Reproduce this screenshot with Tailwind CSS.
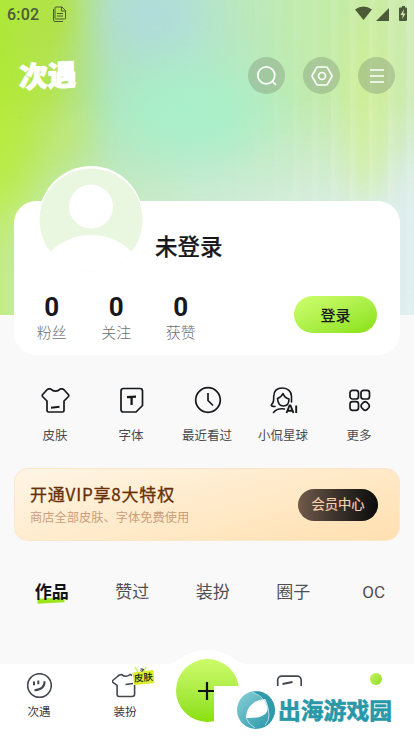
<!DOCTYPE html>
<html lang="zh-CN">
<head>
<meta charset="utf-8">
<meta name="viewport" content="width=device-width, initial-scale=1">
<title>次遇</title>
<script src="https://cdn.jsdelivr.net/npm/@tailwindcss/browser@4"></script>
</head>
<body class="bg-[#f9f9f9]">
<div class="relative flex h-[736px] w-[414px] flex-col overflow-hidden bg-[#f9f9f9] font-['Roboto','Noto_Sans_CJK_SC',sans-serif] text-[#17181b]">

  <!-- Header backdrop -->
  <svg class="absolute top-0 left-0" width="414" height="315" viewBox="0 0 414 315" color-interpolation-filters="sRGB">
    <defs>
      <linearGradient id="base" x1="0" x2="1" y1="0" y2="0">
        <stop offset="0" stop-color="#aee838"/><stop offset=".12" stop-color="#b4e454"/><stop offset=".28" stop-color="#b2e2ba"/><stop offset=".46" stop-color="#b5e6cc"/><stop offset=".7" stop-color="#bfebb0"/><stop offset=".9" stop-color="#c8ec9e"/><stop offset="1" stop-color="#cdebb5"/>
      </linearGradient>
      <linearGradient id="low" x1="0" x2="1" y1="0" y2="0">
        <stop offset="0" stop-color="#c3ec86"/><stop offset=".1" stop-color="#c4ebb0"/><stop offset=".5" stop-color="#cfecd4"/><stop offset="1" stop-color="#dfeef0"/>
      </linearGradient>
      <linearGradient id="fade" x1="0" x2="0" y1="0" y2="1"><stop offset=".3" stop-color="#000"/><stop offset=".68" stop-color="#fff"/></linearGradient>
      <mask id="m"><rect width="414" height="315" fill="url(#fade)"/></mask>
      <linearGradient id="ribfade" x1="0" x2="1" y1="0" y2="0"><stop offset=".5" stop-color="#000"/><stop offset=".9" stop-color="#fff"/></linearGradient>
      <mask id="rm"><rect width="414" height="315" fill="url(#ribfade)"/></mask>
      <filter id="b" x="-150%" y="-150%" width="400%" height="400%"><feGaussianBlur stdDeviation="27"/></filter>
      <filter id="s" x="-300%" y="-100%" width="700%" height="300%"><feGaussianBlur stdDeviation="15"/></filter>
      <linearGradient id="rib" x1="9" x2="28" y1="0" y2="0" gradientUnits="userSpaceOnUse" spreadMethod="repeat">
        <stop offset="0" stop-color="#fff" stop-opacity=".15"/><stop offset=".5" stop-color="#fff" stop-opacity="0"/><stop offset=".85" stop-color="#fff" stop-opacity="0"/><stop offset="1" stop-color="#fff" stop-opacity=".13"/>
      </linearGradient>
      <clipPath id="c"><rect width="414" height="315"/></clipPath>
    </defs>
    <g clip-path="url(#c)">
      <rect width="414" height="315" fill="url(#base)"/>
      <rect width="414" height="315" fill="url(#low)" mask="url(#m)"/>
      <ellipse cx="150" cy="15" rx="42" ry="48" fill="#afdbe0" filter="url(#b)"/>
      <ellipse cx="190" cy="112" rx="85" ry="42" fill="#a7f0c9" filter="url(#b)"/>
      <ellipse cx="-2" cy="150" rx="28" ry="75" fill="#b9ec3a" filter="url(#b)"/>
      <ellipse cx="54" cy="12" rx="18" ry="38" fill="#afe13c" opacity=".75" filter="url(#s)"/>
      <ellipse cx="68" cy="132" rx="18" ry="26" fill="#c5eb77" opacity=".6" filter="url(#s)"/>
      <ellipse cx="366" cy="115" rx="14" ry="85" fill="#d5f193" opacity=".8" filter="url(#s)"/>
      <ellipse cx="414" cy="215" rx="12" ry="60" fill="#dcedeb" filter="url(#s)"/>
      <rect width="414" height="315" fill="url(#rib)" mask="url(#rm)"/>
    </g>
  </svg>

  <!-- Status bar -->
  <div class="relative flex h-7 shrink-0 items-center pr-[7px] pl-[7px] text-[#4b5b38]">
    <span class="mt-px text-[16px] leading-7 font-medium tracking-[0.2px]">6:02</span>
    <svg class="ml-[13px]" width="15" height="17" viewBox="0 0 15 17" fill="none" stroke="currentColor" stroke-width="1"><path d="M4 1h6l3.500 3.500V12q0 1-1 1H4q-1 0-1-1V2q0-1 1-1ZM9.500 1v4h4M1.500 3v11q0 1.500 1.500 1.500h8M5 7.500h6M5 10h6"/></svg>
    <svg class="ml-auto" width="52" height="16" viewBox="0 0 52 16" fill="currentColor"><path d="M0 3.500Q8.500-2.500 17 3.500L8.500 14ZM34 2v13H21ZM45 1.500h2V0h3v1.500h1q1 0 1 1V14q0 1-1 1h-6q-1 0-1-1V2.500q0-1 1-1Z"/><path d="m49 3-3.500 6h2.300l-.6 4L50.500 7.500h-2.300Z" fill="#d0ebb0"/></svg>
  </div>

  <!-- App header -->
  <header class="relative flex h-[95px] shrink-0 items-center gap-[18px] pr-[19px] pl-[19px]">
    <div class="mt-[4px] mr-auto origin-left -skew-y-3 text-[29px] leading-8 font-black tracking-[-0.5px] text-white [-webkit-text-stroke:0.8px_white]">次遇</div>
    <div class="flex size-[37px] items-center justify-center rounded-full bg-[#7f9578]/40">
      <svg width="21" height="21" viewBox="0 0 21 21" fill="none" stroke="#fff" stroke-width="1.700"><circle cx="10.300" cy="10.300" r="8.500"/><path d="m16 16 4 4"/></svg>
    </div>
    <div class="flex size-[37px] items-center justify-center rounded-full bg-[#7f9578]/40">
      <svg width="22" height="20" viewBox="0 0 22 20" fill="none" stroke="#fff" stroke-width="1.700" stroke-linejoin="round"><path d="M6.500 1h9Q16 1 16.400 1.600L20.700 9.200q.5.800 0 1.600L16.400 18.400Q16 19 15.500 19h-9q-.5 0-.9-.6L1.300 10.800q-.5-.8 0-1.600L5.600 1.600Q6 1 6.500 1Z"/><circle cx="11" cy="10" r="3.500"/></svg>
    </div>
    <div class="flex size-[37px] items-center justify-center rounded-full bg-[#7f9578]/40">
      <svg width="14" height="14" viewBox="0 0 14 14" stroke="#fff" stroke-width="1.600"><path d="M0 1h14M0 7h14M0 13h14"/></svg>
    </div>
  </header>

  <!-- Profile card -->
  <section class="relative mx-[14px] mt-[78px] flex h-[154px] shrink-0 flex-col rounded-[22px] bg-white">
    <svg class="absolute -top-[35px] left-[25px]" width="104" height="106" viewBox="0 0 104 106">
      <defs><clipPath id="av"><circle cx="52" cy="54" r="51.500"/></clipPath></defs>
      <circle cx="52" cy="52" r="52" fill="#fff"/>
      <g clip-path="url(#av)"><rect width="104" height="106" fill="#eaf7e0"/><circle cx="52" cy="40.500" r="22" fill="#fff"/><circle cx="52" cy="127" r="58" fill="#fff"/><rect y="87" width="104" height="20" fill="#fff"/></g>
    </svg>
    <h1 class="mt-[30px] ml-[141px] text-[22.500px] leading-8 font-medium [-webkit-text-stroke:0.200px_#17181b]">未登录</h1>
    <div class="mt-[28px] flex items-start pl-[5.500px]">
      <div class="flex w-[64.500px] flex-col items-center"><b class="text-[26px] leading-[32px]">0</b><span class="text-[15px] leading-5 font-light text-[#6f6f73]">粉丝</span></div>
      <div class="flex w-[64.500px] flex-col items-center"><b class="text-[26px] leading-[32px]">0</b><span class="text-[15px] leading-5 font-light text-[#6f6f73]">关注</span></div>
      <div class="flex w-[64.500px] flex-col items-center"><b class="text-[26px] leading-[32px]">0</b><span class="text-[15px] leading-5 font-light text-[#6f6f73]">获赞</span></div>
      <button class="mt-[5px] mr-[23px] ml-auto h-[37px] w-[83px] rounded-full bg-linear-to-br from-[#d0ff6e] to-[#88e000] pt-[3px] text-[15px] font-medium">登录</button>
    </div>
  </section>

  <!-- Shortcuts -->
  <nav class="mt-[29px] grid shrink-0 grid-cols-5 px-[17px] text-[12.500px] leading-5 text-[#4a4a4d]">
    <div class="flex flex-col items-center gap-[10px]">
      <svg width="32" height="32" viewBox="0 0 32 32" fill="none" stroke="#17181b" stroke-width="1.700" stroke-linejoin="round"><path d="M10 4.800h1.500Q16.500 9.500 21.500 4.800H23q1 0 2 1l4.500 5q.6.900 0 1.700L25 17V26.500q0 1.500-1.500 1.500H9.500Q8 28 8 26.500V17L3.500 12.500q-.6-.8 0-1.700L8 5.800q1-1 2-1Z"/><path d="m12 23.700 8.500-.9" stroke-width="2"/></svg>
      <span>皮肤</span>
    </div>
    <div class="flex flex-col items-center gap-[10px]">
      <svg width="32" height="32" viewBox="0 0 32 32" fill="none" stroke="#17181b" stroke-width="1.700" stroke-linejoin="round"><path d="M8.500 4.500h16.500Q27.500 4.500 27.500 7v14.500L21 28H8.500Q6 28 6 25.500V7q0-2.500 2.500-2.500Z"/><path d="m12 13.200 9-.5M16.600 13v8" stroke-width="2.300"/></svg>
      <span>字体</span>
    </div>
    <div class="flex flex-col items-center gap-[10px]">
      <svg width="32" height="32" viewBox="0 0 32 32" fill="none" stroke="#17181b" stroke-width="1.700"><circle cx="17" cy="16" r="12.300"/><path d="M17 9v7.500l5 5"/></svg>
      <span>最近看过</span>
    </div>
    <div class="flex flex-col items-center gap-[10px]">
      <svg width="32" height="32" viewBox="0 0 32 32" fill="none" stroke="#17181b" stroke-width="1.600" stroke-linecap="round" stroke-linejoin="round"><path d="M8 22.500q-4.500 0-3.500-2 2.500-1.500 2.200-8C6.700 7 10.200 4 15.500 4s9 3.500 9 8.500v5.500M16 9.500q-2 4-5.500 5 .5 7.500 6 7.500t5.500-7q-4.500-1-6-5.500ZM6.500 28.500Q10 24 17.500 25"/><path d="m19.500 29 3-7.500h1l3 7.500M20.500 26.800h5M29.200 21.500V29" stroke-width="1.900" stroke-linecap="butt"/></svg>
      <span>小侃星球</span>
    </div>
    <div class="flex flex-col items-center gap-[10px]">
      <svg width="32" height="32" viewBox="0 0 32 32" fill="none" stroke="#17181b" stroke-width="1.700"><rect x="7" y="6.300" width="8.500" height="8.700" rx="2.500"/><rect x="18" y="6.300" width="8.500" height="8.700" rx="2.500"/><rect x="7" y="17.600" width="8.500" height="8.700" rx="2.500"/><path d="m20.700 18.200q1.500-1 3 0l2.200 2.300q1 1.500 0 3l-2.200 2.300q-1.500 1-3 0l-2.200-2.300q-1-1.500 0-3Z"/></svg>
      <span>更多</span>
    </div>
  </nav>

  <!-- VIP banner -->
  <section class="mx-[14px] mt-[22px] flex h-[73px] shrink-0 items-center justify-between rounded-[14px] border border-[#fde6cc] bg-linear-[165deg,#fff5e5,#ffe0b0] pr-[21px] pl-[15px]">
    <div class="flex flex-col">
      <h2 class="font-['Noto_Sans_CJK_SC',sans-serif] text-[17px] leading-6 tracking-[0.800px] text-[#682f06] [-webkit-text-stroke:0.300px_#682f06]">开通VIP享8大特权</h2>
      <p class="mt-[2px] text-[12.250px] leading-5 text-[#cc9d78]">商店全部皮肤、字体免费使用</p>
    </div>
    <button class="h-8 w-20 rounded-full bg-linear-to-r from-[#705a4b] to-[#0c0d0c] pt-px text-[13.300px] text-[#f7d2ab] [-webkit-text-stroke:0.200px_#f7d2ab]">会员中心</button>
  </section>

  <!-- Content tabs -->
  <nav class="mt-[37px] grid w-[402.500px] shrink-0 translate-x-[11.500px] grid-cols-5 text-center text-[17px] leading-7 text-[#4f4f52]">
    <div class="relative"><span class="absolute top-[20px] left-[26px] h-[5px] w-[27px] -skew-y-3 bg-[#9ae51e]"></span><span class="relative font-bold text-[#111214]">作品</span></div>
    <div>赞过</div>
    <div>装扮</div>
    <div>圈子</div>
    <div>OC</div>
  </nav>

  <!-- Bottom navigation -->
  <footer class="relative mt-auto flex h-[72px] shrink-0 bg-white text-[11.500px] leading-4 text-[#33353b]">
    <svg class="absolute -top-[14px] left-[164px]" width="86" height="15" viewBox="0 0 86 15" fill="#fff"><path d="M0 15Q9 14 17 8 28 0 43 0t26 8q8 6 17 7Z"/></svg>
    <div class="flex w-[78px] flex-col items-center pt-[9px]">
      <svg width="26" height="26" viewBox="0 0 26 26" fill="none" stroke="#44474f" stroke-width="1.600"><circle cx="13.500" cy="12.500" r="11.800"/><path d="M8 8.500v3.700M12.300 7.500v3.700M18.500 8.200q.5 8-10 9" stroke-width="2"/></svg>
      <span class="mt-[5px]">次遇</span>
    </div>
    <div class="relative ml-[7px] flex w-[80px] flex-col items-center pt-[9px]">
      <svg width="26" height="26" viewBox="0 0 26 26" fill="none" stroke="#44474f" stroke-width="1.600" stroke-linejoin="round"><path d="M20 2.500 18 1.500q-4 3.500-8.500 0-3 .5-4 2L.7 7.500q-.8 1 .2 1.800l4.200 3V21q0 2.500 2 2.500h13q2.500 0 2.500-2.500v-9M13.500 11.500l7.500-1"/></svg>
      <span class="mt-[5px]">装扮</span>
      <svg class="absolute top-0 left-[47px]" width="24" height="22" viewBox="0 0 24 22"><path d="m3 3 3 5M14 3l-3 6" stroke="#c6f577" stroke-width="1.600"/><path d="m1.500 8.500 19-2.500q1 0 1 1l.8 11q0 1-1 1.300L3 21q-1 0-1-1L.5 9.500q0-1 1-1Z" fill="#dbed2f"/><path d="m8.500 5 3 .2-1 2q-1.500 0-2-.7" stroke="#222" fill="none"/></svg>
      <span class="absolute top-[6px] left-[48.500px] -rotate-6 text-[9.500px] leading-4 font-medium text-[#17181b]">皮肤</span>
    </div>
    <div class="relative -mt-[5px] ml-[10.500px] flex size-[63px] items-center justify-center rounded-full bg-linear-to-b from-[#cdfb69] to-[#8bdf00]">
      <svg width="18" height="18" viewBox="0 0 18 18" stroke="#111" stroke-width="2.200"><path d="M0 9h18M9 0v18"/></svg>
    </div>
    <div class="flex w-[101px] justify-center pt-[9px]">
      <svg width="26" height="26" viewBox="0 0 26 26" fill="none" stroke="#44474f" stroke-width="1.700"><rect x="1.700" y="3.200" width="23.500" height="21" rx="4"/><path d="m6.500 11 10-2" stroke-width="2.200"/></svg>
    </div>
    <div class="flex w-[72px] justify-center pt-[9px]">
      <div class="size-3 rounded-full bg-linear-to-br from-[#c5f35d] to-[#90de1e]"></div>
    </div>
    <!-- Site badge over the navigation -->
    <div class="absolute right-0 bottom-0 flex h-[50px] w-[200px] items-center bg-white pl-[22px]">
      <svg class="-mt-[2px]" width="40" height="40" viewBox="0 0 40 40">
        <defs><linearGradient id="o" x1="0" y1="0" x2="1" y2="1"><stop offset="0" stop-color="#8bd1d9"/><stop offset="1" stop-color="#2293a5"/></linearGradient></defs>
        <circle cx="20" cy="20" r="19" fill="url(#o)"/>
        <path d="M17 2q15 7 16 23 0 7-4 11 9-5 10-16-1-13-13-18-5-1-9 0Z" fill="#319aaa"/>
        <path d="M10 28C10 18 17 10 29 9c7 12 1 20-19 19Z" fill="#fff"/>
        <path d="M16 2q17 6 17 23 0 6-4 10M10 28q2 6 9 10" fill="none" stroke="#a9dfe5" stroke-width="1"/>
      </svg>
      <span class="mt-px ml-[2px] text-[22.800px] leading-8 font-bold text-[#2698a8] [-webkit-text-stroke:0.600px_#2698a8]">出海游戏园</span>
    </div>
  </footer>
</div>
</body>
</html>
